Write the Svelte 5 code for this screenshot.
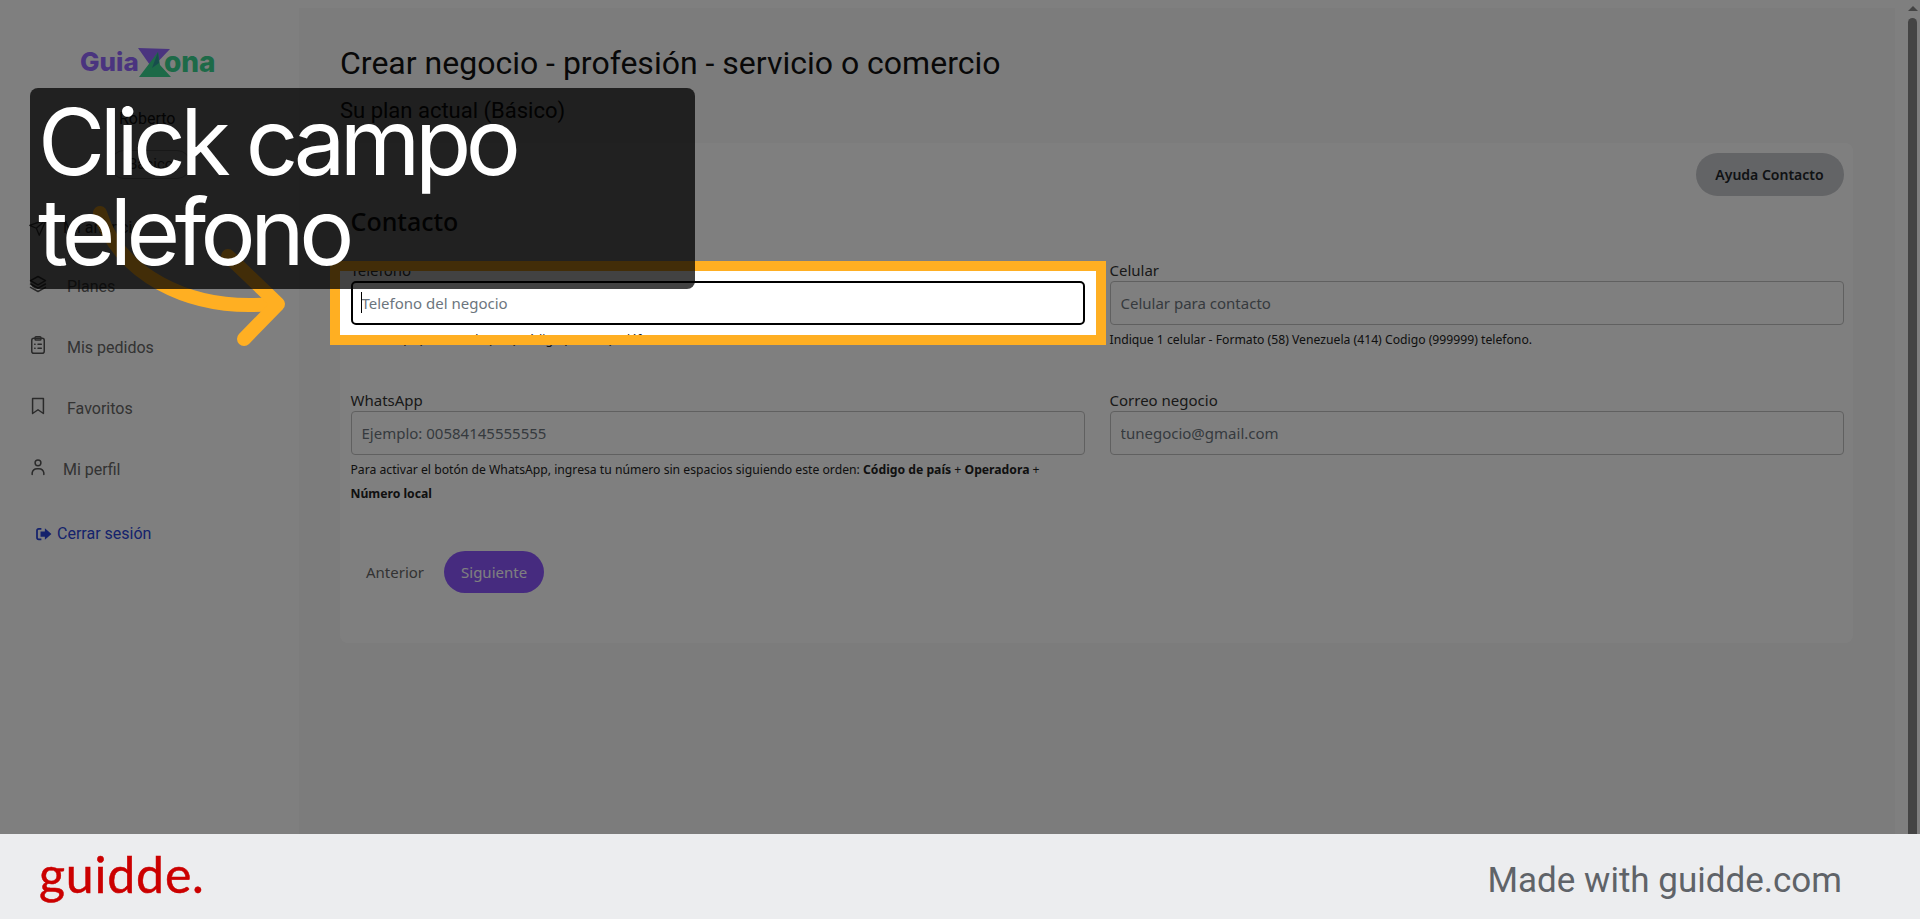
<script>
  const menu = [
    { label: 'Planes', icon: 'layers' },
    { label: 'Mis pedidos', icon: 'clipboard' },
    { label: 'Favoritos', icon: 'bookmark' },
    { label: 'Mi perfil', icon: 'user' }
  ]
</script>

<div class="page">
  <div class="app">
    <aside class="sidebar">
      <div class="logo">
        <span class="guia">Guia</span>
        <svg class="logo-z" viewBox="0 0 33 30" width="33" height="30">
          <polygon points="0,0 32,1 14,20" fill="#9468ff" />
          <polygon points="1,29 20,4 22,17 33,29" fill="#3bd490" />
          <polygon points="14,20 20,4 21,15" fill="#2f9a9a" />
        </svg>
        <span class="zona">ona</span>
      </div>
      <div class="user">Roberto</div>
      <span class="badge">Básico</span>

      <div class="anuncio">
        <svg viewBox="0 0 24 24" width="20" height="20" fill="none" stroke="#555" stroke-width="1.6" stroke-linejoin="round"><path d="M22 3 2 10l8 3.500L13.500 22z" /><path d="M22 3 10 13.500" /></svg>
        <span>Mi anuncio</span>
      </div>

      <nav class="menu">
        {#each menu as item}
          <div class="item" class:narrow={item.icon === 'user'}>
            <svg viewBox="0 0 24 24" width="20" height="20" fill="none" stroke="#555" stroke-width="1.8" stroke-linecap="round" stroke-linejoin="round">
              {#if item.icon === 'layers'}
                <path d="M12 3 3 8l9 5 9-5z" /><path d="m3 12 9 5 9-5" /><path d="m3 16 9 5 9-5" />
              {:else if item.icon === 'clipboard'}
                <rect x="4.500" y="4" width="15" height="18" rx="2.500" /><rect x="8.500" y="2" width="7" height="4" rx="1" /><path d="M8 11h.5M8 16h.5M12 11h4M12 16h4" />
              {:else if item.icon === 'bookmark'}
                <path d="M5.500 3h13v18L12 16.500 5.500 21z" />
              {:else}
                <circle cx="12" cy="7" r="3.500" /><path d="M5 21v-2a6 6 0 0 1 6-5h2a6 6 0 0 1 6 5v2" />
              {/if}
            </svg>
            <span>{item.label}</span>
          </div>
        {/each}
      </nav>

      <div class="logout">
        <svg viewBox="0 0 18 16" width="16" height="14" fill="#2a45d8"><path d="M6 1H3a3 3 0 0 0-3 3v8a3 3 0 0 0 3 3h3v-2H3a1 1 0 0 1-1-1V4a1 1 0 0 1 1-1h3z" /><path d="M10 1.500 17.500 8 10 14.500V11H5V5h5z" /></svg>
        <span>Cerrar sesión</span>
      </div>
    </aside>

    <main class="main">
      <h1>Crear negocio - profesión - servicio o comercio</h1>
      <h2>Su plan actual (Básico)</h2>

      <section class="card">
        <div class="card-top">
          <button class="help">Ayuda Contacto</button>
        </div>
        <h3>Contacto</h3>

        <div class="form">
          <div class="field">
            <label for="tel">Telefono</label>
            <div class="input-wrap">
              <input id="tel" class="focused" placeholder="Telefono del negocio" />
              <span class="caret"></span>
            </div>
            <p class="hint">Formato (58) Venezuela (414) Código (999999) teléfono.</p>
          </div>
          <div class="field">
            <label for="cel">Celular</label>
            <input id="cel" placeholder="Celular para contacto" />
            <p class="hint">Indique 1 celular - Formato (58) Venezuela (414) Codigo (999999) telefono.</p>
          </div>
          <div class="field">
            <label for="wa">WhatsApp</label>
            <input id="wa" placeholder="Ejemplo: 00584145555555" />
            <p class="hint">Para activar el botón de WhatsApp, ingresa tu número sin espacios siguiendo este orden: <b>Código de país</b> + <b>Operadora</b> + <b>Número local</b></p>
          </div>
          <div class="field">
            <label for="mail">Correo negocio</label>
            <input id="mail" placeholder="tunegocio@gmail.com" />
          </div>
        </div>

        <div class="actions">
          <button class="prev">Anterior</button>
          <button class="next">Siguiente</button>
        </div>
      </section>
    </main>

    <div class="scroll">
      <div class="scroll-up"></div>
      <div class="thumb"></div>
    </div>
  </div>

  <!-- guidde overlay -->
  <div class="spotlight"></div>
  <svg class="arrow" viewBox="0 0 320 360" width="320" height="360" fill="none" stroke="#ffaf22" stroke-width="14" stroke-linecap="round" stroke-linejoin="round">
    <path d="M100 213C118 272 186 312 272 304" />
    <path d="M228 256 278 304 244 339" />
  </svg>
  <div class="tooltip">Click campo telefono</div>

  <footer class="footer">
    <span class="brand">guidde.</span>
    <span class="made">Made with guidde.com</span>
  </footer>
</div>

<style>
  :global(body) {
    margin: 0;
    background: #fff;
  }

  .page {
    position: relative;
    width: 1920px;
    height: 919px;
    overflow: hidden;
    font-family: "Noto Sans", sans-serif;
    color: #212529;
  }

  .app {
    display: flex;
    height: 834px;
    background: #fff;
  }

  .sidebar {
    width: 299px;
    flex: none;
    display: flex;
    flex-direction: column;
    font-family: Roboto, sans-serif;
    color: #666;
    font-size: 16px;
  }

  .logo {
    display: flex;
    align-items: flex-start;
    margin: 48px 0 0 80px;
    height: 30px;
    font-family: Inter, sans-serif;
    font-weight: 800;
    font-size: 26px;
    line-height: 28px;
  }

  .guia { color: #9468ff; width: 58px; }
  .zona { color: #3bd490; margin-left: -7px; font-size: 28px; }
  .logo-z { flex: none; }

  .user {
    margin: 30px 0 0 119px;
    line-height: 22px;
    color: #222;
  }

  .badge {
    align-self: flex-start;
    margin: 20px 0 0 110px;
    padding: 2px 17px;
    border: 1px solid #bbb;
    border-radius: 14px;
    font-size: 15px;
    line-height: 23px;
    color: #444;
  }

  .anuncio {
    display: flex;
    align-items: center;
    gap: 15px;
    margin: 36px 0 0 28px;
    height: 24px;
    color: #444;
  }

  .menu {
    display: flex;
    flex-direction: column;
    margin-top: 35px;
  }

  .item {
    display: flex;
    align-items: flex-start;
    gap: 19px;
    height: 61px;
    padding-left: 28px;
  }

  .item span { line-height: 26px; }
  .item.narrow { gap: 15px; }

  .logout {
    display: flex;
    align-items: center;
    gap: 5px;
    margin: 5px 0 0 36px;
    color: #2a45d8;
    line-height: 22px;
  }

  .main {
    width: 1596px;
    flex: none;
    margin-top: 8px;
    padding: 0 42px 0 41px;
    box-sizing: border-box;
    background: #f8f8f8;
  }

  h1 {
    margin: 36px 0 0;
    font-family: Roboto, sans-serif;
    font-size: 32px;
    line-height: 38px;
    font-weight: 400;
    color: #111;
  }

  h2 {
    margin: 15px 0 0;
    font-family: Roboto, sans-serif;
    font-size: 22px;
    line-height: 28px;
    font-weight: 400;
    color: #111;
  }

  .card {
    margin-top: 18px;
    height: 500px;
    padding: 10px 9.500px 0 10.500px;
    box-sizing: border-box;
    background: #fff;
    border-radius: 8px;
  }

  .card-top {
    display: flex;
    justify-content: flex-end;
  }

  .help {
    width: 148px;
    height: 43px;
    border: 0;
    border-radius: 22px;
    background: #c6c8cc;
    color: #212529;
    font: 600 14px "Noto Sans", sans-serif;
  }

  h3 {
    margin: 9px 0 0;
    font-size: 25px;
    line-height: 32px;
    font-weight: 500;
    color: #111;
  }

  .form {
    display: grid;
    grid-template-columns: 734px 734px;
    column-gap: 25px;
    margin-top: 22px;
  }

  .field {
    display: flex;
    flex-direction: column;
    height: 130px;
  }

  .field label {
    font-size: 15px;
    line-height: 22px;
    color: #333;
  }

  .input-wrap { position: relative; }

  input {
    width: 100%;
    height: 44px;
    box-sizing: border-box;
    padding: 0 10px;
    border: 1px solid #c0c0c0;
    border-radius: 4px;
    background: #fff;
    font: 15px "Noto Sans", sans-serif;
    color: #212529;
  }

  input::placeholder { color: #6c757d; opacity: 1; }

  input.focused {
    border: 2px solid #000;
    padding: 0 9px;
    border-radius: 5px;
    outline: none;
  }

  .caret {
    position: absolute;
    left: 10px;
    top: 11px;
    width: 1px;
    height: 21px;
    background: #000;
  }

  .hint {
    margin: 3px 0 0;
    font-size: 12.200px;
    line-height: 24px;
    color: #222;
  }

  .hint b { font-weight: 700; }

  .actions {
    display: flex;
    align-items: center;
    gap: 20px;
    margin-top: 32px;
    padding-left: 15.500px;
  }

  .actions button {
    border: 0;
    background: none;
    font: 15px "Noto Sans", sans-serif;
    padding: 0;
  }

  .prev { color: #666; }

  .actions .next {
    width: 100px;
    height: 42px;
    border-radius: 21px;
    background: #8c57ff;
    color: #fff;
  }

  .scroll {
    margin-left: 13px;
    width: 9px;
    flex: none;
    display: flex;
    flex-direction: column;
    align-items: center;
    padding-top: 6px;
    box-sizing: border-box;
  }

  .scroll-up {
    width: 0;
    height: 0;
    border-left: 5px solid transparent;
    border-right: 5px solid transparent;
    border-bottom: 5px solid #888;
  }

  .thumb {
    flex: 1;
    width: 100%;
    margin-top: 7px;
    border-radius: 5px 5px 0 0;
    background: #888;
  }

  .spotlight {
    position: absolute;
    left: 330px;
    top: 261px;
    width: 776px;
    height: 84px;
    box-sizing: border-box;
    border: 10px solid #ffaf22;
    box-shadow: 0 0 0 3000px rgba(0, 0, 0, 0.5);
  }

  .arrow {
    position: absolute;
    left: 0;
    top: 0;
  }

  .tooltip {
    position: absolute;
    left: 30px;
    top: 88px;
    width: 665px;
    height: 201px;
    box-sizing: border-box;
    padding: 9px 8px;
    border-radius: 8px;
    background: rgba(0, 0, 0, 0.74);
    color: #fff;
    font-family: Inter, sans-serif;
    font-size: 92px;
    line-height: 90px;
    letter-spacing: -5.500px;
  }

  .footer {
    position: absolute;
    left: 0;
    right: 0;
    bottom: 0;
    height: 85px;
    display: flex;
    align-items: center;
    justify-content: space-between;
    padding: 0 78px 0 39px;
    box-sizing: border-box;
    background: #ecedef;
  }

  .brand {
    margin-top: -6px;
    font-family: Lato, sans-serif;
    font-size: 50px;
    line-height: 60px;
    letter-spacing: 0.8px;
    color: #cb0000;
    -webkit-text-stroke: 0.5px #cb0000;
  }

  .made {
    margin-top: 7px;
    font-family: Roboto, sans-serif;
    font-size: 35px;
    color: #5f6368;
  }
</style>
